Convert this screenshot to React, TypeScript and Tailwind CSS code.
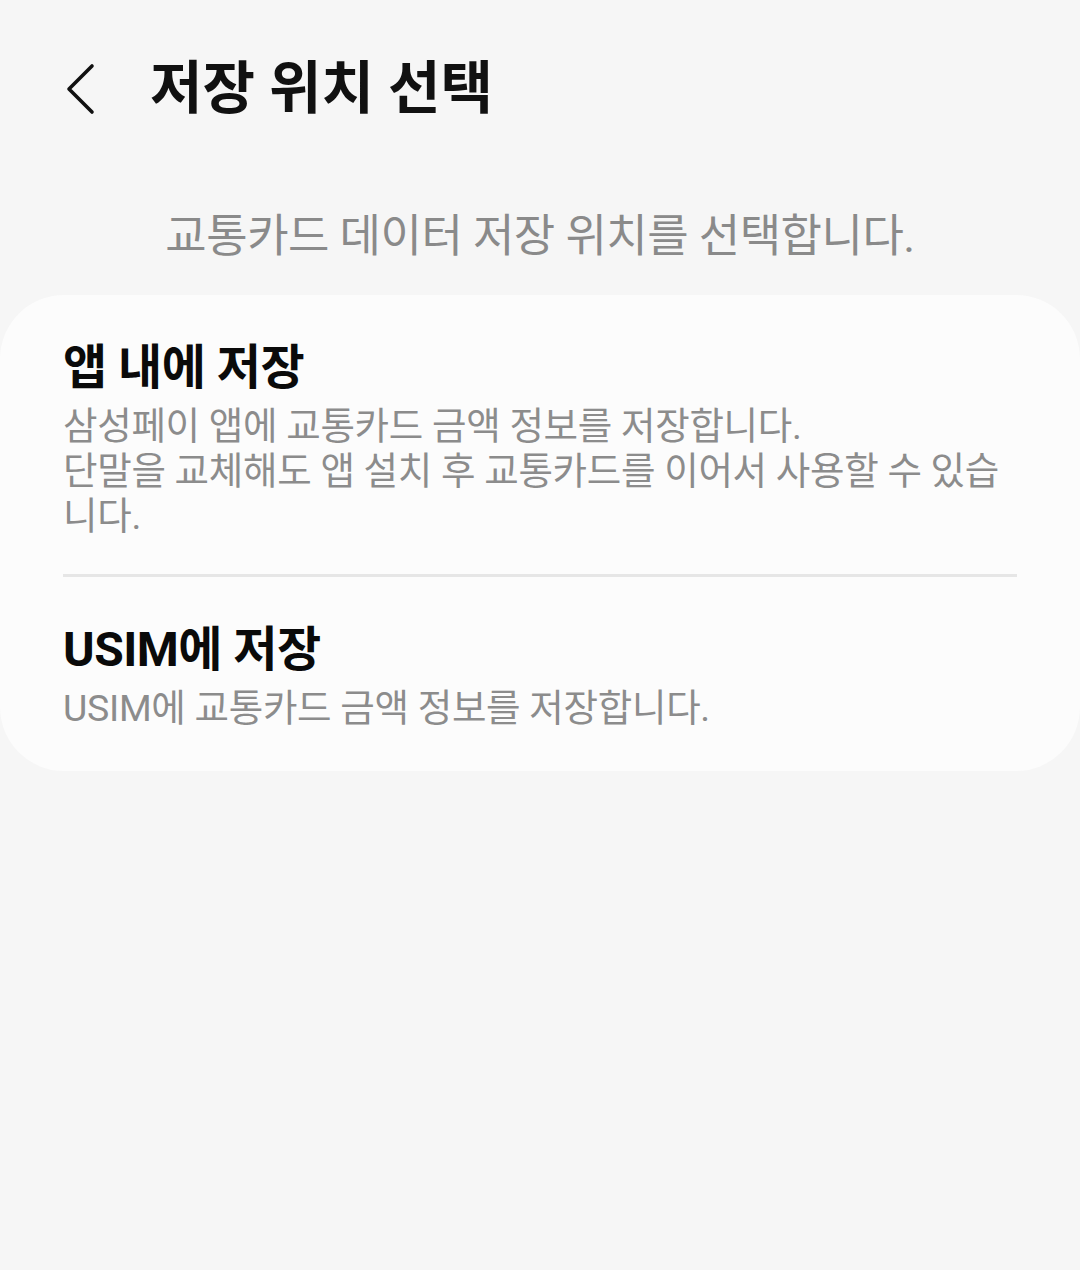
import React from "react";

const font = { fontFamily: '"Roboto", "Noto Sans CJK KR", sans-serif' };

export default function App() {
  return (
    <div className="w-[1092px] min-h-[1270px] bg-white">
      <div
        className="w-[1080px] min-h-[1270px] bg-[#f6f6f6] flex flex-col"
        style={font}
      >
        <header className="h-[178px] flex items-center">
          <div className="w-[150px] flex items-center pl-[64px]">
            <svg width="34" height="52" viewBox="0 0 34 52" fill="none">
              <path
                d="M28 3 L5 26 L28 49"
                stroke="#111"
                strokeWidth="3.6"
                strokeLinecap="round"
                strokeLinejoin="round"
              />
            </svg>
          </div>
          <h1 className="text-[57px] leading-[64px] font-bold text-[#111]">
            저장 위치 선택
          </h1>
        </header>

        <p className="mt-[35px] text-center text-[45px] leading-[48px] text-[#8a8a8a] tracking-[-0.5px]">
          교통카드 데이터 저장 위치를 선택합니다.
        </p>

        <div className="mt-[34px] bg-[#fcfcfc] rounded-[64px] px-[63px] pt-[44px] pb-[40px]">
          <div className="flex flex-col">
            <div className="text-[48px] leading-[58px] font-bold text-[#0a0a0a] tracking-[-0.5px]">
              앱 내에 저장
            </div>
            <div className="mt-[7px] text-[37.5px] leading-[45px] text-[#8c8c8c] tracking-[-0.3px]">
              삼성페이 앱에 교통카드 금액 정보를 저장합니다.
              <br />
              단말을 교체해도 앱 설치 후 교통카드를 이어서 사용할 수 있습니다.
            </div>
          </div>

          <div className="mt-[35px] h-[3px] bg-[#e6e6e6]" />

          <div className="mt-[44px] flex flex-col">
            <div className="text-[48px] leading-[58px] font-bold text-[#0a0a0a] tracking-[-0.5px]">
              USIM에 저장
            </div>
            <div className="mt-[7px] text-[37.5px] leading-[45px] text-[#8c8c8c] tracking-[-0.3px]">
              USIM에 교통카드 금액 정보를 저장합니다.
            </div>
          </div>
        </div>
      </div>
    </div>
  );
}
